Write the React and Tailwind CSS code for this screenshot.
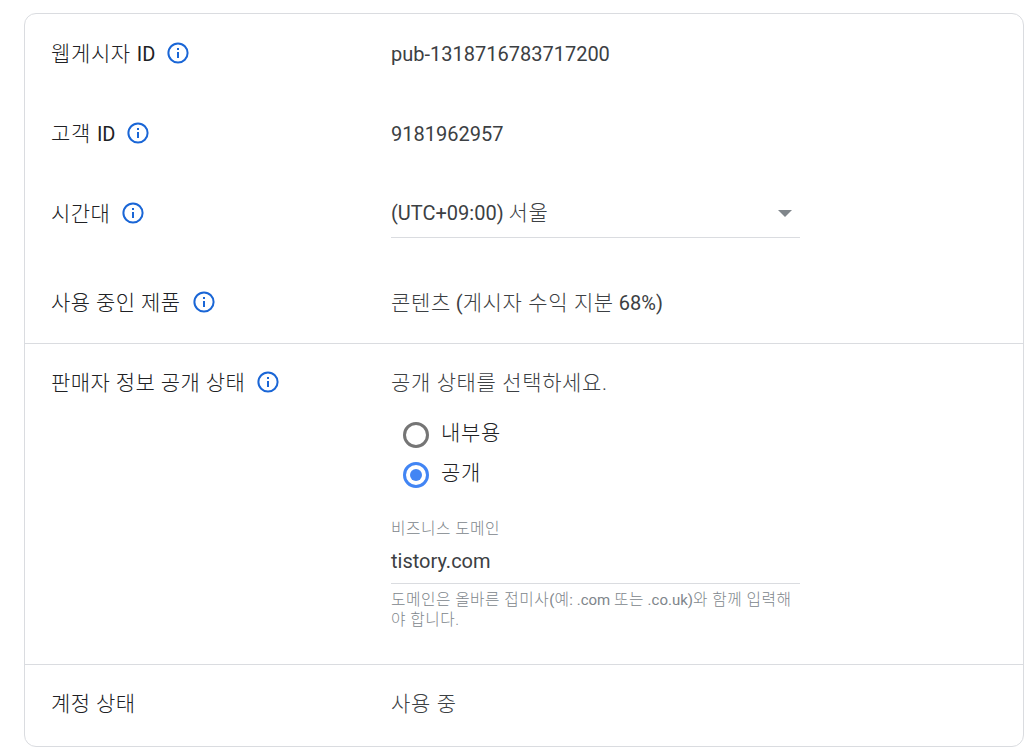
const InfoIcon = () => (
  <svg width="24" height="24" viewBox="0 0 24 24" className="ml-[11px] -mt-[2px] shrink-0 text-[#1a66d6]">
    <circle cx="12" cy="12" r="9.6" fill="none" stroke="currentColor" strokeWidth="2" />
    <rect x="11" y="11" width="2" height="6" fill="currentColor" />
    <rect x="11" y="7" width="2" height="2" fill="currentColor" />
  </svg>
);

// Korean runs are a little larger and wider than the latin text next to them
const K = ({ children }) => <span className="text-[1.05em] tracking-[0.03em] font-light">{children}</span>;
const LK = ({ children }) => <span className="text-[1.05em] tracking-[0.02em] font-light">{children}</span>;

const Label = ({ children, info = true }) => (
  <div className="w-[340px] shrink-0 flex items-center h-6 text-[#202124]">
    <span>{children}</span>
    {info && <InfoIcon />}
  </div>
);

const Row = ({ label, info, className = '', children }) => (
  <div className={`flex pl-[26px] ${className}`}>
    <Label info={info}>{label}</Label>
    <div className="flex-1 min-w-0 text-[#3c4043]">{children}</div>
  </div>
);

const Radio = ({ checked, label }) => (
  <div className="flex items-center h-10 pl-3">
    <span className={`w-[26px] h-[26px] rounded-full border-[3px] flex items-center justify-center ${checked ? 'border-[#4285f4]' : 'border-[#757575]'}`}>
      {checked && <span className="w-3 h-3 rounded-full bg-[#4285f4]" />}
    </span>
    <span className="ml-3 -mt-1 text-[#202124]"><K>{label}</K></span>
  </div>
);

export default function App() {
  return (
    <div className="min-h-screen bg-white pt-[13px] pl-6 pr-[9px] text-[20px] leading-6 font-['Roboto','Noto_Sans_CJK_KR',sans-serif]">
      <div className="border border-[#dadce0] rounded-xl h-[734px] overflow-hidden">
        <div className="h-[330px] border-b border-[#dadce0] pt-[28px]">
          <Row label={<><K>웹게시자</K> <span className="ml-px">ID</span></>} className="h-[80px]">pub-1318716783717200</Row>
          <Row label={<><K>고객</K> <span className="ml-px">ID</span></>} className="h-[80px]">9181962957</Row>
          <Row label={<LK>시간대</LK>} className="h-[89px]">
            <div className="w-[409px] h-[37px] -mt-[1px] border-b border-[#dadce0] flex justify-between pr-2">
              <span>(UTC+09:00) <K>서울</K></span>
              <svg width="14" height="7" viewBox="0 0 14 7" className="mt-[9px] text-[#80868b]">
                <path d="M0 0h14L7 7z" fill="currentColor" />
              </svg>
            </div>
          </Row>
          <Row label={<LK>사용 중인 제품</LK>} className="h-[40px]"><K>콘텐츠</K> (<K>게시자 수익 지분</K> 68%)</Row>
        </div>
        <div className="h-[321px] border-b border-[#dadce0] pt-[27px]">
          <Row label={<LK>판매자 정보 공개 상태</LK>}>
            <div><K>공개 상태를 선택하세요.</K></div>
            <div className="mt-[20px]">
              <Radio label="내부용" />
              <Radio checked label="공개" />
            </div>
            <div className="mt-[24px] w-[409px]">
              <div className="text-[15px] leading-5 text-[#80868b]"><K>비즈니스 도메인</K></div>
              <div className="h-[45px] pt-[10px] border-b border-[#dadce0]">tistory.com</div>
              <div className="mt-[6px] text-[15px] leading-[19px] text-[#80868b]">
                <K>도메인은 올바른 접미사</K>(<K>예</K>: .com <K>또는</K> .co.uk)<K>와 함께 입력해</K>
                <br />
                <K>야 합니다.</K>
              </div>
            </div>
          </Row>
        </div>
        <div className="pt-[27px]">
          <Row label={<LK>계정 상태</LK>} info={false}><K>사용 중</K></Row>
        </div>
      </div>
    </div>
  );
}
